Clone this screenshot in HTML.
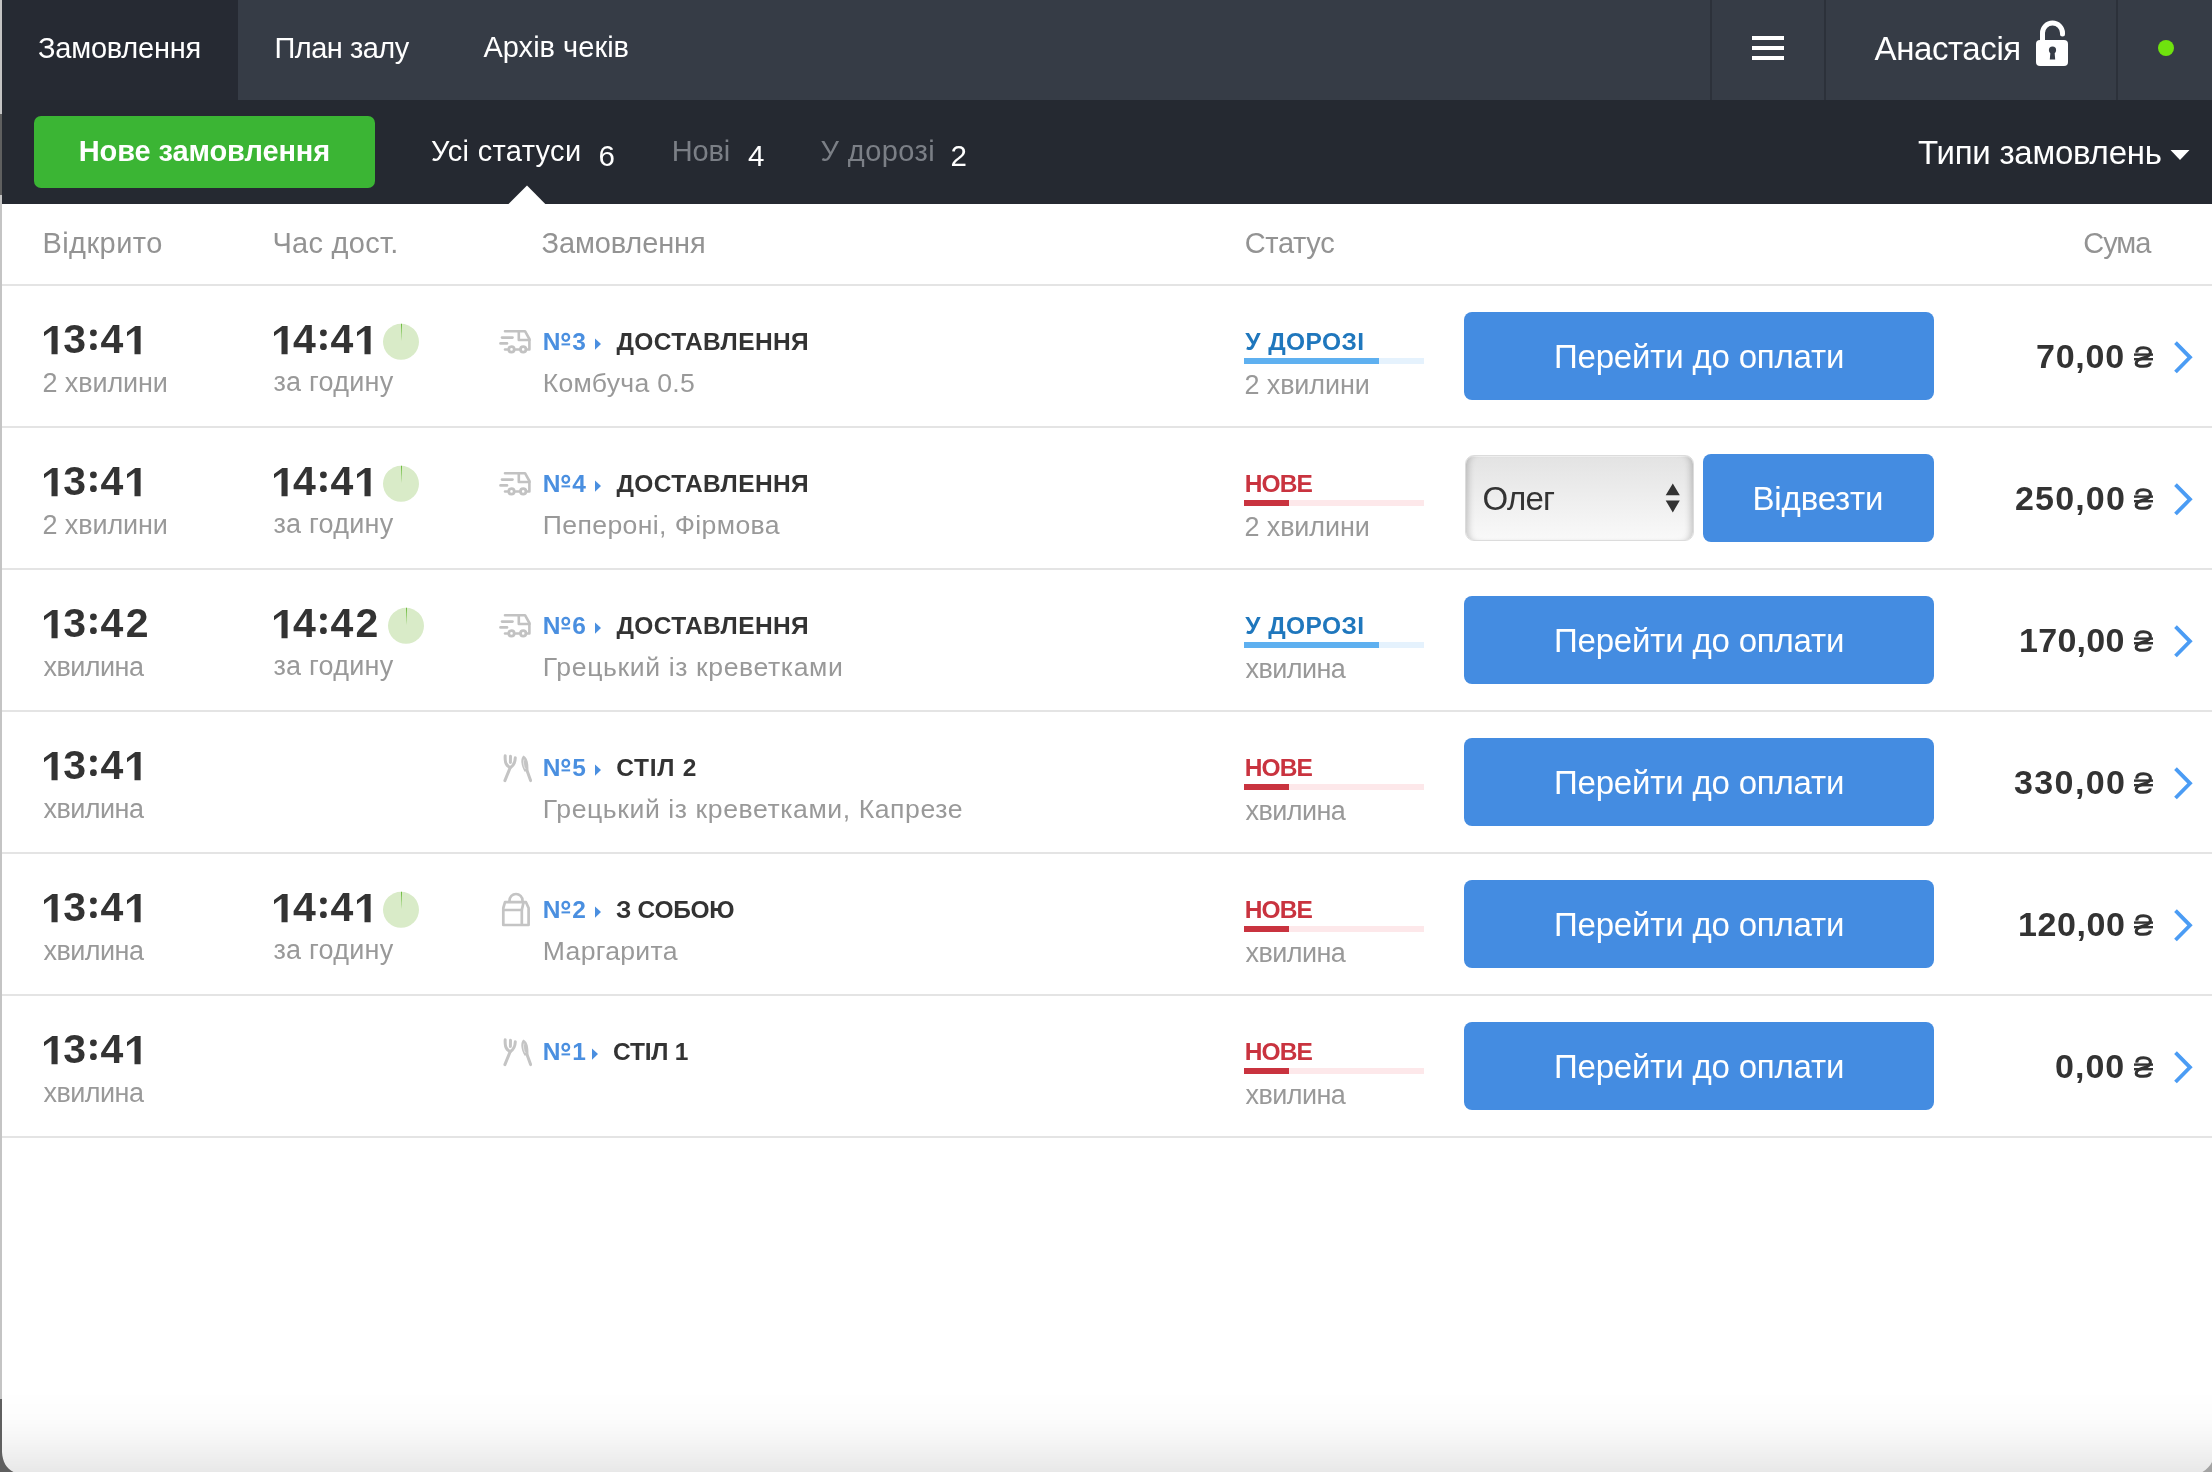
<!DOCTYPE html>
<html><head><meta charset="utf-8">
<style>
*{box-sizing:border-box;margin:0;padding:0}
html,body{width:2212px;height:1472px;overflow:hidden;background:#fff;font-family:"Liberation Sans",sans-serif}
.a{position:absolute;white-space:nowrap}
</style></head><body><div style="position:absolute;left:0;top:0;width:2212px;height:1472px;will-change:transform">
<div class="a" style="left:0;top:0;width:2212px;height:100px;background:#363c46"></div>
<div class="a" style="left:0;top:100px;width:2212px;height:104px;background:#252931"></div>
<div class="a" style="left:2px;top:0;width:236px;height:100px;background:#262a33"></div>
<div class="a" style="left:1710px;top:0;width:2px;height:100px;background:#2c313a"></div>
<div class="a" style="left:1824px;top:0;width:2px;height:100px;background:#2c313a"></div>
<div class="a" style="left:2116px;top:0;width:2px;height:100px;background:#2c313a"></div>
<div class="a" style="left:1752px;top:36px;width:32px;height:4px;background:#fff"></div>
<div class="a" style="left:1752px;top:46px;width:32px;height:4px;background:#fff"></div>
<div class="a" style="left:1752px;top:56px;width:32px;height:4px;background:#fff"></div>
<svg class="a" style="left:0;top:0" width="2212" height="100">
<path d="M2042.5 40 V33 A10 10 0 0 1 2062.5 33 V34" fill="none" stroke="#fff" stroke-width="5" stroke-linecap="round"/>
<rect x="2036" y="40" width="32" height="26" rx="4" fill="#fff"/>
<circle cx="2052.5" cy="50" r="3.6" fill="#363c46"/>
<path d="M2050.5 51 L2049.8 59.5 H2055.2 L2054.5 51 Z" fill="#363c46"/>
<circle cx="2166" cy="48" r="8" fill="#6fe20e"/>
</svg>
<div class="a" style="left:34px;top:116px;width:341px;height:72px;background:#3bb534;border-radius:7px"></div>
<svg class="a" style="left:0;top:100px" width="2212" height="104"><path d="M2170.5 50 H2189.5 L2180 60 Z" fill="#fff"/><path d="M508.5 104 L527 85.5 L545.3 104 Z" fill="#fff"/></svg>
<div class="a" style="left:0;top:284px;width:2212px;height:2px;background:#e4e4e4"></div>
<div class="a" style="left:0;top:426px;width:2212px;height:2px;background:#e4e4e4"></div>
<div class="a" style="left:0;top:568px;width:2212px;height:2px;background:#e4e4e4"></div>
<div class="a" style="left:0;top:710px;width:2212px;height:2px;background:#e4e4e4"></div>
<div class="a" style="left:0;top:852px;width:2212px;height:2px;background:#e4e4e4"></div>
<div class="a" style="left:0;top:994px;width:2212px;height:2px;background:#e4e4e4"></div>
<div class="a" style="left:0;top:1136px;width:2212px;height:2px;background:#e4e4e4"></div>
<svg class="a" style="left:43.9px;top:325.6px;overflow:visible" width="14" height="29"><path d="M0 6.1 L8.3 0 H13.6 V28.2 H7.5 V4.8 L0 10.2 Z" fill="#333"/></svg>
<svg class="a" style="left:89.8px;top:286px;overflow:visible" width="8" height="70"><circle cx="3.4" cy="46.8" r="3.4" fill="#333"/><circle cx="3.4" cy="60.7" r="3.4" fill="#333"/></svg>
<svg class="a" style="left:126.69999999999999px;top:325.6px;overflow:visible" width="14" height="29"><path d="M0 6.1 L8.3 0 H13.6 V28.2 H7.5 V4.8 L0 10.2 Z" fill="#333"/></svg>
<svg class="a" style="left:273.8px;top:325.6px;overflow:visible" width="14" height="29"><path d="M0 6.1 L8.3 0 H13.6 V28.2 H7.5 V4.8 L0 10.2 Z" fill="#333"/></svg>
<svg class="a" style="left:319.7px;top:286px;overflow:visible" width="8" height="70"><circle cx="3.4" cy="46.8" r="3.4" fill="#333"/><circle cx="3.4" cy="60.7" r="3.4" fill="#333"/></svg>
<svg class="a" style="left:356.6px;top:325.6px;overflow:visible" width="14" height="29"><path d="M0 6.1 L8.3 0 H13.6 V28.2 H7.5 V4.8 L0 10.2 Z" fill="#333"/></svg>
<svg class="a" style="left:0;top:286px;overflow:visible" width="1" height="1"><circle cx="401" cy="55.8" r="18" fill="#d9ebc8"/><path d="M401 55.8 L401 37.8 L401.9 37.8 Z" fill="#5db52a"/></svg>
<svg class="a" style="left:500px;top:330px;overflow:visible" width="40" height="30" viewBox="0 0 40 30">
<g fill="none" stroke="#c2c2c2" stroke-width="2.6" stroke-linecap="round" stroke-linejoin="round">
<path d="M5 1.2 H25 L29.4 9 V19.5 H26.5"/>
<path d="M18.8 1.2 V10 H29.4"/>
<path d="M2 7.6 H12.5"/>
<path d="M0.5 13.4 H7"/>
<path d="M5 19.5 H7.5 M15.5 19.5 H19.5"/>
<circle cx="11.5" cy="19.4" r="2.7" stroke-width="2.8"/>
<circle cx="23.2" cy="19.4" r="2.7" stroke-width="2.8"/>
</g></svg>
<svg class="a" style="left:0;top:286px;overflow:visible" width="1" height="1"><ellipse cx="565.8" cy="51.3" rx="3.3" ry="3.5" fill="none" stroke="#4a8fe0" stroke-width="2.3"/><rect x="561.5" y="57.4" width="8.6" height="2" fill="#4a8fe0"/></svg>
<svg class="a" style="left:0;top:286px;overflow:visible" width="1" height="1"><path d="M595 52.4 L601 58 L595 63.7 Z" fill="#4a8fe0"/></svg>
<div class="a" style="left:1244px;top:358px;width:180px;height:6px;background:#e5f2fd"></div><div class="a" style="left:1244px;top:358px;width:135px;height:6px;background:#5eb0f0"></div>
<div class="a" style="left:1464px;top:312px;width:470px;height:88px;background:#448ce1;border-radius:8px"></div>
<svg class="a" style="left:0;top:286px;overflow:visible" width="1" height="1"><g fill="none" stroke="#333" stroke-width="3.1" stroke-linecap="butt"><path d="M2136.9 66.6 C2136.6 63 2139.6 61.7 2143.5 61.7 C2147.6 61.7 2150.4 63.5 2150.4 66.4 C2150.4 69.6 2146 71.2 2143.2 72.1 C2139.6 73.2 2136.2 74.8 2136.2 77.4 C2136.2 79.6 2139 80.3 2143.3 80.3 C2147.3 80.3 2150.2 79.2 2150.2 76.6"/></g><rect x="2134" y="67.4" width="19" height="2.4" fill="#333"/><rect x="2134" y="72" width="19" height="2.4" fill="#333"/></svg>
<svg class="a" style="left:0;top:286px;overflow:visible" width="1" height="1"><path d="M2175.5 56.6 L2190 71.3 L2175.5 86" fill="none" stroke="#4b9cf4" stroke-width="3.8"/></svg>
<svg class="a" style="left:43.9px;top:467.6px;overflow:visible" width="14" height="29"><path d="M0 6.1 L8.3 0 H13.6 V28.2 H7.5 V4.8 L0 10.2 Z" fill="#333"/></svg>
<svg class="a" style="left:89.8px;top:428px;overflow:visible" width="8" height="70"><circle cx="3.4" cy="46.8" r="3.4" fill="#333"/><circle cx="3.4" cy="60.7" r="3.4" fill="#333"/></svg>
<svg class="a" style="left:126.69999999999999px;top:467.6px;overflow:visible" width="14" height="29"><path d="M0 6.1 L8.3 0 H13.6 V28.2 H7.5 V4.8 L0 10.2 Z" fill="#333"/></svg>
<svg class="a" style="left:273.8px;top:467.6px;overflow:visible" width="14" height="29"><path d="M0 6.1 L8.3 0 H13.6 V28.2 H7.5 V4.8 L0 10.2 Z" fill="#333"/></svg>
<svg class="a" style="left:319.7px;top:428px;overflow:visible" width="8" height="70"><circle cx="3.4" cy="46.8" r="3.4" fill="#333"/><circle cx="3.4" cy="60.7" r="3.4" fill="#333"/></svg>
<svg class="a" style="left:356.6px;top:467.6px;overflow:visible" width="14" height="29"><path d="M0 6.1 L8.3 0 H13.6 V28.2 H7.5 V4.8 L0 10.2 Z" fill="#333"/></svg>
<svg class="a" style="left:0;top:428px;overflow:visible" width="1" height="1"><circle cx="401" cy="55.8" r="18" fill="#d9ebc8"/><path d="M401 55.8 L401 37.8 L401.9 37.8 Z" fill="#5db52a"/></svg>
<svg class="a" style="left:500px;top:472px;overflow:visible" width="40" height="30" viewBox="0 0 40 30">
<g fill="none" stroke="#c2c2c2" stroke-width="2.6" stroke-linecap="round" stroke-linejoin="round">
<path d="M5 1.2 H25 L29.4 9 V19.5 H26.5"/>
<path d="M18.8 1.2 V10 H29.4"/>
<path d="M2 7.6 H12.5"/>
<path d="M0.5 13.4 H7"/>
<path d="M5 19.5 H7.5 M15.5 19.5 H19.5"/>
<circle cx="11.5" cy="19.4" r="2.7" stroke-width="2.8"/>
<circle cx="23.2" cy="19.4" r="2.7" stroke-width="2.8"/>
</g></svg>
<svg class="a" style="left:0;top:428px;overflow:visible" width="1" height="1"><ellipse cx="565.8" cy="51.3" rx="3.3" ry="3.5" fill="none" stroke="#4a8fe0" stroke-width="2.3"/><rect x="561.5" y="57.4" width="8.6" height="2" fill="#4a8fe0"/></svg>
<svg class="a" style="left:0;top:428px;overflow:visible" width="1" height="1"><path d="M595 52.4 L601 58 L595 63.7 Z" fill="#4a8fe0"/></svg>
<div class="a" style="left:1244px;top:500px;width:180px;height:6px;background:#fde8ea"></div><div class="a" style="left:1244px;top:500px;width:45px;height:6px;background:#c9333f"></div>
<div class="a" style="left:1464.5px;top:454.6px;width:229.5px;height:86.5px;border-radius:9px;border:1.5px solid #dcdcdc;background:linear-gradient(#e3e3e3,#f9f9f9);box-shadow:inset 7px 0 7px -5px rgba(0,0,0,.22), inset -7px 0 7px -5px rgba(0,0,0,.22), inset 0 1px 0 rgba(255,255,255,.6)"></div>
<svg class="a" style="left:0;top:428px;overflow:visible" width="1" height="1"><path d="M1665.7 67.2 L1672.8 55.5 L1679.8 67.2 Z M1665.7 72.6 L1679.8 72.6 L1672.8 84.4 Z" fill="#333"/></svg>
<div class="a" style="left:1703px;top:454px;width:231px;height:87.5px;background:#448ce1;border-radius:8px"></div>
<svg class="a" style="left:0;top:428px;overflow:visible" width="1" height="1"><g fill="none" stroke="#333" stroke-width="3.1" stroke-linecap="butt"><path d="M2136.9 66.6 C2136.6 63 2139.6 61.7 2143.5 61.7 C2147.6 61.7 2150.4 63.5 2150.4 66.4 C2150.4 69.6 2146 71.2 2143.2 72.1 C2139.6 73.2 2136.2 74.8 2136.2 77.4 C2136.2 79.6 2139 80.3 2143.3 80.3 C2147.3 80.3 2150.2 79.2 2150.2 76.6"/></g><rect x="2134" y="67.4" width="19" height="2.4" fill="#333"/><rect x="2134" y="72" width="19" height="2.4" fill="#333"/></svg>
<svg class="a" style="left:0;top:428px;overflow:visible" width="1" height="1"><path d="M2175.5 56.6 L2190 71.3 L2175.5 86" fill="none" stroke="#4b9cf4" stroke-width="3.8"/></svg>
<svg class="a" style="left:43.9px;top:609.6px;overflow:visible" width="14" height="29"><path d="M0 6.1 L8.3 0 H13.6 V28.2 H7.5 V4.8 L0 10.2 Z" fill="#333"/></svg>
<svg class="a" style="left:89.8px;top:570px;overflow:visible" width="8" height="70"><circle cx="3.4" cy="46.8" r="3.4" fill="#333"/><circle cx="3.4" cy="60.7" r="3.4" fill="#333"/></svg>
<svg class="a" style="left:273.8px;top:609.6px;overflow:visible" width="14" height="29"><path d="M0 6.1 L8.3 0 H13.6 V28.2 H7.5 V4.8 L0 10.2 Z" fill="#333"/></svg>
<svg class="a" style="left:319.7px;top:570px;overflow:visible" width="8" height="70"><circle cx="3.4" cy="46.8" r="3.4" fill="#333"/><circle cx="3.4" cy="60.7" r="3.4" fill="#333"/></svg>
<svg class="a" style="left:0;top:570px;overflow:visible" width="1" height="1"><circle cx="406" cy="55.8" r="18" fill="#d9ebc8"/><path d="M406 55.8 L406 37.8 L406.9 37.8 Z" fill="#5db52a"/></svg>
<svg class="a" style="left:500px;top:614px;overflow:visible" width="40" height="30" viewBox="0 0 40 30">
<g fill="none" stroke="#c2c2c2" stroke-width="2.6" stroke-linecap="round" stroke-linejoin="round">
<path d="M5 1.2 H25 L29.4 9 V19.5 H26.5"/>
<path d="M18.8 1.2 V10 H29.4"/>
<path d="M2 7.6 H12.5"/>
<path d="M0.5 13.4 H7"/>
<path d="M5 19.5 H7.5 M15.5 19.5 H19.5"/>
<circle cx="11.5" cy="19.4" r="2.7" stroke-width="2.8"/>
<circle cx="23.2" cy="19.4" r="2.7" stroke-width="2.8"/>
</g></svg>
<svg class="a" style="left:0;top:570px;overflow:visible" width="1" height="1"><ellipse cx="565.8" cy="51.3" rx="3.3" ry="3.5" fill="none" stroke="#4a8fe0" stroke-width="2.3"/><rect x="561.5" y="57.4" width="8.6" height="2" fill="#4a8fe0"/></svg>
<svg class="a" style="left:0;top:570px;overflow:visible" width="1" height="1"><path d="M595 52.4 L601 58 L595 63.7 Z" fill="#4a8fe0"/></svg>
<div class="a" style="left:1244px;top:642px;width:180px;height:6px;background:#e5f2fd"></div><div class="a" style="left:1244px;top:642px;width:135px;height:6px;background:#5eb0f0"></div>
<div class="a" style="left:1464px;top:596px;width:470px;height:88px;background:#448ce1;border-radius:8px"></div>
<svg class="a" style="left:0;top:570px;overflow:visible" width="1" height="1"><g fill="none" stroke="#333" stroke-width="3.1" stroke-linecap="butt"><path d="M2136.9 66.6 C2136.6 63 2139.6 61.7 2143.5 61.7 C2147.6 61.7 2150.4 63.5 2150.4 66.4 C2150.4 69.6 2146 71.2 2143.2 72.1 C2139.6 73.2 2136.2 74.8 2136.2 77.4 C2136.2 79.6 2139 80.3 2143.3 80.3 C2147.3 80.3 2150.2 79.2 2150.2 76.6"/></g><rect x="2134" y="67.4" width="19" height="2.4" fill="#333"/><rect x="2134" y="72" width="19" height="2.4" fill="#333"/></svg>
<svg class="a" style="left:0;top:570px;overflow:visible" width="1" height="1"><path d="M2175.5 56.6 L2190 71.3 L2175.5 86" fill="none" stroke="#4b9cf4" stroke-width="3.8"/></svg>
<svg class="a" style="left:43.9px;top:751.6px;overflow:visible" width="14" height="29"><path d="M0 6.1 L8.3 0 H13.6 V28.2 H7.5 V4.8 L0 10.2 Z" fill="#333"/></svg>
<svg class="a" style="left:89.8px;top:712px;overflow:visible" width="8" height="70"><circle cx="3.4" cy="46.8" r="3.4" fill="#333"/><circle cx="3.4" cy="60.7" r="3.4" fill="#333"/></svg>
<svg class="a" style="left:126.69999999999999px;top:751.6px;overflow:visible" width="14" height="29"><path d="M0 6.1 L8.3 0 H13.6 V28.2 H7.5 V4.8 L0 10.2 Z" fill="#333"/></svg>
<svg class="a" style="left:503px;top:755px;overflow:visible" width="40" height="30" viewBox="0 0 40 30">
<g fill="none" stroke="#c4c4c4" stroke-width="3" stroke-linecap="round" stroke-linejoin="round">
<path d="M2.2 0.8 C2 5 1.8 10 7.2 12.6 C11.8 10 12.2 6 12.3 2.8"/>
<path d="M7.5 1.2 L7.4 7.5"/>
<path d="M7.2 12.6 L1.9 25.6"/>
<path d="M24 15.6 L27.6 25.6"/>
</g>
<path d="M20.6 0.4 C17.2 2.6 17.6 10 21.6 16.8 L25.4 15.4 C25.6 9 25 3 20.6 0.4 Z" fill="#c4c4c4"/>
<path d="M21 4.5 C20 7 20.5 11 22.3 14" stroke="#fff" stroke-width="0.9" fill="none" opacity="0.6"/>
</svg>
<svg class="a" style="left:0;top:712px;overflow:visible" width="1" height="1"><ellipse cx="565.8" cy="51.3" rx="3.3" ry="3.5" fill="none" stroke="#4a8fe0" stroke-width="2.3"/><rect x="561.5" y="57.4" width="8.6" height="2" fill="#4a8fe0"/></svg>
<svg class="a" style="left:0;top:712px;overflow:visible" width="1" height="1"><path d="M595 52.4 L601 58 L595 63.7 Z" fill="#4a8fe0"/></svg>
<div class="a" style="left:1244px;top:784px;width:180px;height:6px;background:#fde8ea"></div><div class="a" style="left:1244px;top:784px;width:45px;height:6px;background:#c9333f"></div>
<div class="a" style="left:1464px;top:738px;width:470px;height:88px;background:#448ce1;border-radius:8px"></div>
<svg class="a" style="left:0;top:712px;overflow:visible" width="1" height="1"><g fill="none" stroke="#333" stroke-width="3.1" stroke-linecap="butt"><path d="M2136.9 66.6 C2136.6 63 2139.6 61.7 2143.5 61.7 C2147.6 61.7 2150.4 63.5 2150.4 66.4 C2150.4 69.6 2146 71.2 2143.2 72.1 C2139.6 73.2 2136.2 74.8 2136.2 77.4 C2136.2 79.6 2139 80.3 2143.3 80.3 C2147.3 80.3 2150.2 79.2 2150.2 76.6"/></g><rect x="2134" y="67.4" width="19" height="2.4" fill="#333"/><rect x="2134" y="72" width="19" height="2.4" fill="#333"/></svg>
<svg class="a" style="left:0;top:712px;overflow:visible" width="1" height="1"><path d="M2175.5 56.6 L2190 71.3 L2175.5 86" fill="none" stroke="#4b9cf4" stroke-width="3.8"/></svg>
<svg class="a" style="left:43.9px;top:893.6px;overflow:visible" width="14" height="29"><path d="M0 6.1 L8.3 0 H13.6 V28.2 H7.5 V4.8 L0 10.2 Z" fill="#333"/></svg>
<svg class="a" style="left:89.8px;top:854px;overflow:visible" width="8" height="70"><circle cx="3.4" cy="46.8" r="3.4" fill="#333"/><circle cx="3.4" cy="60.7" r="3.4" fill="#333"/></svg>
<svg class="a" style="left:126.69999999999999px;top:893.6px;overflow:visible" width="14" height="29"><path d="M0 6.1 L8.3 0 H13.6 V28.2 H7.5 V4.8 L0 10.2 Z" fill="#333"/></svg>
<svg class="a" style="left:273.8px;top:893.6px;overflow:visible" width="14" height="29"><path d="M0 6.1 L8.3 0 H13.6 V28.2 H7.5 V4.8 L0 10.2 Z" fill="#333"/></svg>
<svg class="a" style="left:319.7px;top:854px;overflow:visible" width="8" height="70"><circle cx="3.4" cy="46.8" r="3.4" fill="#333"/><circle cx="3.4" cy="60.7" r="3.4" fill="#333"/></svg>
<svg class="a" style="left:356.6px;top:893.6px;overflow:visible" width="14" height="29"><path d="M0 6.1 L8.3 0 H13.6 V28.2 H7.5 V4.8 L0 10.2 Z" fill="#333"/></svg>
<svg class="a" style="left:0;top:854px;overflow:visible" width="1" height="1"><circle cx="401" cy="55.8" r="18" fill="#d9ebc8"/><path d="M401 55.8 L401 37.8 L401.9 37.8 Z" fill="#5db52a"/></svg>
<svg class="a" style="left:501.5px;top:896px;overflow:visible" width="40" height="40" viewBox="0 0 40 40">
<g fill="none" stroke="#c4c4c4" stroke-width="2.7" stroke-linejoin="round">
<path d="M1.3 29 V12 L3 6.2 H24 L26.6 12 V29 Z"/>
<path d="M1.3 14 H19.8 V29"/>
<path d="M19.8 14 L21.5 6.5"/>
<path d="M7.5 6.2 V4.5 A6.5 6.5 0 0 1 20.5 4.5 V6.2"/>
</g></svg>
<svg class="a" style="left:0;top:854px;overflow:visible" width="1" height="1"><ellipse cx="565.8" cy="51.3" rx="3.3" ry="3.5" fill="none" stroke="#4a8fe0" stroke-width="2.3"/><rect x="561.5" y="57.4" width="8.6" height="2" fill="#4a8fe0"/></svg>
<svg class="a" style="left:0;top:854px;overflow:visible" width="1" height="1"><path d="M595 52.4 L601 58 L595 63.7 Z" fill="#4a8fe0"/></svg>
<div class="a" style="left:1244px;top:926px;width:180px;height:6px;background:#fde8ea"></div><div class="a" style="left:1244px;top:926px;width:45px;height:6px;background:#c9333f"></div>
<div class="a" style="left:1464px;top:880px;width:470px;height:88px;background:#448ce1;border-radius:8px"></div>
<svg class="a" style="left:0;top:854px;overflow:visible" width="1" height="1"><g fill="none" stroke="#333" stroke-width="3.1" stroke-linecap="butt"><path d="M2136.9 66.6 C2136.6 63 2139.6 61.7 2143.5 61.7 C2147.6 61.7 2150.4 63.5 2150.4 66.4 C2150.4 69.6 2146 71.2 2143.2 72.1 C2139.6 73.2 2136.2 74.8 2136.2 77.4 C2136.2 79.6 2139 80.3 2143.3 80.3 C2147.3 80.3 2150.2 79.2 2150.2 76.6"/></g><rect x="2134" y="67.4" width="19" height="2.4" fill="#333"/><rect x="2134" y="72" width="19" height="2.4" fill="#333"/></svg>
<svg class="a" style="left:0;top:854px;overflow:visible" width="1" height="1"><path d="M2175.5 56.6 L2190 71.3 L2175.5 86" fill="none" stroke="#4b9cf4" stroke-width="3.8"/></svg>
<svg class="a" style="left:43.9px;top:1035.6px;overflow:visible" width="14" height="29"><path d="M0 6.1 L8.3 0 H13.6 V28.2 H7.5 V4.8 L0 10.2 Z" fill="#333"/></svg>
<svg class="a" style="left:89.8px;top:996px;overflow:visible" width="8" height="70"><circle cx="3.4" cy="46.8" r="3.4" fill="#333"/><circle cx="3.4" cy="60.7" r="3.4" fill="#333"/></svg>
<svg class="a" style="left:126.69999999999999px;top:1035.6px;overflow:visible" width="14" height="29"><path d="M0 6.1 L8.3 0 H13.6 V28.2 H7.5 V4.8 L0 10.2 Z" fill="#333"/></svg>
<svg class="a" style="left:503px;top:1039px;overflow:visible" width="40" height="30" viewBox="0 0 40 30">
<g fill="none" stroke="#c4c4c4" stroke-width="3" stroke-linecap="round" stroke-linejoin="round">
<path d="M2.2 0.8 C2 5 1.8 10 7.2 12.6 C11.8 10 12.2 6 12.3 2.8"/>
<path d="M7.5 1.2 L7.4 7.5"/>
<path d="M7.2 12.6 L1.9 25.6"/>
<path d="M24 15.6 L27.6 25.6"/>
</g>
<path d="M20.6 0.4 C17.2 2.6 17.6 10 21.6 16.8 L25.4 15.4 C25.6 9 25 3 20.6 0.4 Z" fill="#c4c4c4"/>
<path d="M21 4.5 C20 7 20.5 11 22.3 14" stroke="#fff" stroke-width="0.9" fill="none" opacity="0.6"/>
</svg>
<svg class="a" style="left:0;top:996px;overflow:visible" width="1" height="1"><ellipse cx="565.8" cy="51.3" rx="3.3" ry="3.5" fill="none" stroke="#4a8fe0" stroke-width="2.3"/><rect x="561.5" y="57.4" width="8.6" height="2" fill="#4a8fe0"/></svg>
<svg class="a" style="left:0;top:996px;overflow:visible" width="1" height="1"><path d="M592 52.4 L598 58 L592 63.7 Z" fill="#4a8fe0"/></svg>
<div class="a" style="left:1244px;top:1068px;width:180px;height:6px;background:#fde8ea"></div><div class="a" style="left:1244px;top:1068px;width:45px;height:6px;background:#c9333f"></div>
<div class="a" style="left:1464px;top:1022px;width:470px;height:88px;background:#448ce1;border-radius:8px"></div>
<svg class="a" style="left:0;top:996px;overflow:visible" width="1" height="1"><g fill="none" stroke="#333" stroke-width="3.1" stroke-linecap="butt"><path d="M2136.9 66.6 C2136.6 63 2139.6 61.7 2143.5 61.7 C2147.6 61.7 2150.4 63.5 2150.4 66.4 C2150.4 69.6 2146 71.2 2143.2 72.1 C2139.6 73.2 2136.2 74.8 2136.2 77.4 C2136.2 79.6 2139 80.3 2143.3 80.3 C2147.3 80.3 2150.2 79.2 2150.2 76.6"/></g><rect x="2134" y="67.4" width="19" height="2.4" fill="#333"/><rect x="2134" y="72" width="19" height="2.4" fill="#333"/></svg>
<svg class="a" style="left:0;top:996px;overflow:visible" width="1" height="1"><path d="M2175.5 56.6 L2190 71.3 L2175.5 86" fill="none" stroke="#4b9cf4" stroke-width="3.8"/></svg>
<div class="a" style="left:38.00px;top:31.05px;font-size:29px;line-height:35px;color:#fff;font-weight:400;letter-spacing:-0.222px">Замовлення</div>
<div class="a" style="left:274.50px;top:30.75px;font-size:29px;line-height:35px;color:#fff;font-weight:400;letter-spacing:-0.513px">План залу</div>
<div class="a" style="left:483.40px;top:30.45px;font-size:29px;line-height:35px;color:#fff;font-weight:400;letter-spacing:0.03px">Архів чеків</div>
<div class="a" style="left:1874.60px;top:29.16px;font-size:33px;line-height:40px;color:#fff;font-weight:400;letter-spacing:-0.412px">Анастасія</div>
<div class="a" style="left:78.70px;top:134.35px;font-size:29px;line-height:35px;color:#fff;font-weight:700;letter-spacing:-0.093px">Нове замовлення</div>
<div class="a" style="left:430.90px;top:134.45px;font-size:29px;line-height:35px;color:#fff;font-weight:400;letter-spacing:0.33px">Усі статуси</div>
<div class="a" style="left:598.60px;top:137.57px;font-size:29.5px;line-height:35px;color:#fff;font-weight:400;letter-spacing:0px">6</div>
<div class="a" style="left:671.80px;top:133.95px;font-size:29px;line-height:35px;color:#7b7f86;font-weight:400;letter-spacing:-0.167px">Нові</div>
<div class="a" style="left:748.00px;top:137.77px;font-size:29.5px;line-height:35px;color:#fff;font-weight:400;letter-spacing:0px">4</div>
<div class="a" style="left:820.50px;top:133.95px;font-size:29px;line-height:35px;color:#7b7f86;font-weight:400;letter-spacing:0.414px">У дорозі</div>
<div class="a" style="left:950.50px;top:137.77px;font-size:29.5px;line-height:35px;color:#fff;font-weight:400;letter-spacing:0px">2</div>
<div class="a" style="left:1918.00px;top:133.26px;font-size:33px;line-height:40px;color:#fff;font-weight:400;letter-spacing:-0.231px">Типи замовлень</div>
<div class="a" style="left:42.40px;top:226.35px;font-size:29px;line-height:35px;color:#939393;font-weight:400;letter-spacing:0.457px">Відкрито</div>
<div class="a" style="left:272.50px;top:226.35px;font-size:29px;line-height:35px;color:#939393;font-weight:400;letter-spacing:0.275px">Час дост.</div>
<div class="a" style="left:541.50px;top:226.35px;font-size:29px;line-height:35px;color:#939393;font-weight:400;letter-spacing:-0.122px">Замовлення</div>
<div class="a" style="left:1244.70px;top:226.35px;font-size:29px;line-height:35px;color:#939393;font-weight:400;letter-spacing:-0.34px">Статус</div>
<div class="a" style="left:2083.20px;top:226.35px;font-size:29px;line-height:35px;color:#939393;font-weight:400;letter-spacing:-0.967px">Сума</div>
<div class="a" style="left:63.20px;top:315.09px;font-size:41px;line-height:49px;color:#333;font-weight:700;letter-spacing:0px">3</div>
<div class="a" style="left:100.60px;top:315.09px;font-size:41px;line-height:49px;color:#333;font-weight:700;letter-spacing:0px">4</div>
<div class="a" style="left:42.60px;top:366.54px;font-size:27px;line-height:32px;color:#999;font-weight:400;letter-spacing:-0.125px">2 хвилини</div>
<div class="a" style="left:293.10px;top:315.09px;font-size:41px;line-height:49px;color:#333;font-weight:700;letter-spacing:0px">4</div>
<div class="a" style="left:330.50px;top:315.09px;font-size:41px;line-height:49px;color:#333;font-weight:700;letter-spacing:0px">4</div>
<div class="a" style="left:273.40px;top:366.44px;font-size:27px;line-height:32px;color:#999;font-weight:400;letter-spacing:0.25px">за годину</div>
<div class="a" style="left:542.80px;top:326.81px;font-size:24.5px;line-height:29px;color:#4a8fe0;font-weight:700;letter-spacing:0px">N</div>
<div class="a" style="left:572.30px;top:326.81px;font-size:24.5px;line-height:29px;color:#4a8fe0;font-weight:700;letter-spacing:0px">3</div>
<div class="a" style="left:616.40px;top:326.91px;font-size:24.5px;line-height:29px;color:#333;font-weight:700;letter-spacing:0.4px">ДОСТАВЛЕННЯ</div>
<div class="a" style="left:542.80px;top:366.58px;font-size:26.6px;line-height:32px;color:#999;font-weight:400;letter-spacing:0.27px">Комбуча 0.5</div>
<div class="a" style="left:1245.20px;top:326.91px;font-size:24.5px;line-height:29px;color:#1f77bd;font-weight:700;letter-spacing:0.457px">У ДОРОЗІ</div>
<div class="a" style="left:1244.50px;top:369.44px;font-size:27px;line-height:32px;color:#999;font-weight:400;letter-spacing:-0.125px">2 хвилини</div>
<div class="a" style="left:1554.00px;top:336.56px;font-size:33px;line-height:40px;color:#fff;font-weight:400;letter-spacing:-0.188px">Перейти до оплати</div>
<div class="a" style="left:2036.00px;top:336.01px;font-size:34px;line-height:41px;color:#333;font-weight:700;letter-spacing:0.775px">70,00</div>
<div class="a" style="left:63.20px;top:457.09px;font-size:41px;line-height:49px;color:#333;font-weight:700;letter-spacing:0px">3</div>
<div class="a" style="left:100.60px;top:457.09px;font-size:41px;line-height:49px;color:#333;font-weight:700;letter-spacing:0px">4</div>
<div class="a" style="left:42.60px;top:508.54px;font-size:27px;line-height:32px;color:#999;font-weight:400;letter-spacing:-0.125px">2 хвилини</div>
<div class="a" style="left:293.10px;top:457.09px;font-size:41px;line-height:49px;color:#333;font-weight:700;letter-spacing:0px">4</div>
<div class="a" style="left:330.50px;top:457.09px;font-size:41px;line-height:49px;color:#333;font-weight:700;letter-spacing:0px">4</div>
<div class="a" style="left:273.40px;top:508.44px;font-size:27px;line-height:32px;color:#999;font-weight:400;letter-spacing:0.25px">за годину</div>
<div class="a" style="left:542.80px;top:468.81px;font-size:24.5px;line-height:29px;color:#4a8fe0;font-weight:700;letter-spacing:0px">N</div>
<div class="a" style="left:572.30px;top:468.81px;font-size:24.5px;line-height:29px;color:#4a8fe0;font-weight:700;letter-spacing:0px">4</div>
<div class="a" style="left:616.40px;top:468.91px;font-size:24.5px;line-height:29px;color:#333;font-weight:700;letter-spacing:0.4px">ДОСТАВЛЕННЯ</div>
<div class="a" style="left:542.80px;top:508.58px;font-size:26.6px;line-height:32px;color:#999;font-weight:400;letter-spacing:0.381px">Пепероні, Фірмова</div>
<div class="a" style="left:1244.70px;top:468.91px;font-size:24.5px;line-height:29px;color:#c9333f;font-weight:700;letter-spacing:-0.867px">НОВЕ</div>
<div class="a" style="left:1244.50px;top:511.44px;font-size:27px;line-height:32px;color:#999;font-weight:400;letter-spacing:-0.125px">2 хвилини</div>
<div class="a" style="left:1482.50px;top:478.56px;font-size:33px;line-height:40px;color:#333;font-weight:400;letter-spacing:-0.833px">Олег</div>
<div class="a" style="left:1752.50px;top:478.56px;font-size:33px;line-height:40px;color:#fff;font-weight:400;letter-spacing:-0.157px">Відвезти</div>
<div class="a" style="left:2015.00px;top:478.01px;font-size:34px;line-height:41px;color:#333;font-weight:700;letter-spacing:1.16px">250,00</div>
<div class="a" style="left:63.20px;top:599.09px;font-size:41px;line-height:49px;color:#333;font-weight:700;letter-spacing:0px">3</div>
<div class="a" style="left:100.60px;top:599.09px;font-size:41px;line-height:49px;color:#333;font-weight:700;letter-spacing:0px">4</div>
<div class="a" style="left:125.70px;top:599.09px;font-size:41px;line-height:49px;color:#333;font-weight:700;letter-spacing:0px">2</div>
<div class="a" style="left:43.60px;top:650.54px;font-size:27px;line-height:32px;color:#999;font-weight:400;letter-spacing:-0.55px">хвилина</div>
<div class="a" style="left:293.10px;top:599.09px;font-size:41px;line-height:49px;color:#333;font-weight:700;letter-spacing:0px">4</div>
<div class="a" style="left:330.50px;top:599.09px;font-size:41px;line-height:49px;color:#333;font-weight:700;letter-spacing:0px">4</div>
<div class="a" style="left:355.60px;top:599.09px;font-size:41px;line-height:49px;color:#333;font-weight:700;letter-spacing:0px">2</div>
<div class="a" style="left:273.40px;top:650.44px;font-size:27px;line-height:32px;color:#999;font-weight:400;letter-spacing:0.25px">за годину</div>
<div class="a" style="left:542.80px;top:610.81px;font-size:24.5px;line-height:29px;color:#4a8fe0;font-weight:700;letter-spacing:0px">N</div>
<div class="a" style="left:572.30px;top:610.81px;font-size:24.5px;line-height:29px;color:#4a8fe0;font-weight:700;letter-spacing:0px">6</div>
<div class="a" style="left:616.40px;top:610.91px;font-size:24.5px;line-height:29px;color:#333;font-weight:700;letter-spacing:0.4px">ДОСТАВЛЕННЯ</div>
<div class="a" style="left:542.80px;top:650.58px;font-size:26.6px;line-height:32px;color:#999;font-weight:400;letter-spacing:0.619px">Грецький із креветками</div>
<div class="a" style="left:1245.20px;top:610.91px;font-size:24.5px;line-height:29px;color:#1f77bd;font-weight:700;letter-spacing:0.457px">У ДОРОЗІ</div>
<div class="a" style="left:1245.50px;top:653.44px;font-size:27px;line-height:32px;color:#999;font-weight:400;letter-spacing:-0.55px">хвилина</div>
<div class="a" style="left:1554.00px;top:620.56px;font-size:33px;line-height:40px;color:#fff;font-weight:400;letter-spacing:-0.188px">Перейти до оплати</div>
<div class="a" style="left:2019.00px;top:620.01px;font-size:34px;line-height:41px;color:#333;font-weight:700;letter-spacing:0.28px">170,00</div>
<div class="a" style="left:63.20px;top:741.09px;font-size:41px;line-height:49px;color:#333;font-weight:700;letter-spacing:0px">3</div>
<div class="a" style="left:100.60px;top:741.09px;font-size:41px;line-height:49px;color:#333;font-weight:700;letter-spacing:0px">4</div>
<div class="a" style="left:43.60px;top:792.54px;font-size:27px;line-height:32px;color:#999;font-weight:400;letter-spacing:-0.55px">хвилина</div>
<div class="a" style="left:542.80px;top:752.81px;font-size:24.5px;line-height:29px;color:#4a8fe0;font-weight:700;letter-spacing:0px">N</div>
<div class="a" style="left:572.30px;top:752.81px;font-size:24.5px;line-height:29px;color:#4a8fe0;font-weight:700;letter-spacing:0px">5</div>
<div class="a" style="left:616.30px;top:752.91px;font-size:24.5px;line-height:29px;color:#333;font-weight:700;letter-spacing:0.74px">СТІЛ 2</div>
<div class="a" style="left:542.80px;top:792.58px;font-size:26.6px;line-height:32px;color:#999;font-weight:400;letter-spacing:0.583px">Грецький із креветками, Капрезе</div>
<div class="a" style="left:1244.70px;top:752.91px;font-size:24.5px;line-height:29px;color:#c9333f;font-weight:700;letter-spacing:-0.867px">НОВЕ</div>
<div class="a" style="left:1245.50px;top:795.44px;font-size:27px;line-height:32px;color:#999;font-weight:400;letter-spacing:-0.55px">хвилина</div>
<div class="a" style="left:1554.00px;top:762.56px;font-size:33px;line-height:40px;color:#fff;font-weight:400;letter-spacing:-0.188px">Перейти до оплати</div>
<div class="a" style="left:2014.00px;top:762.01px;font-size:34px;line-height:41px;color:#333;font-weight:700;letter-spacing:1.4px">330,00</div>
<div class="a" style="left:63.20px;top:883.09px;font-size:41px;line-height:49px;color:#333;font-weight:700;letter-spacing:0px">3</div>
<div class="a" style="left:100.60px;top:883.09px;font-size:41px;line-height:49px;color:#333;font-weight:700;letter-spacing:0px">4</div>
<div class="a" style="left:43.60px;top:934.54px;font-size:27px;line-height:32px;color:#999;font-weight:400;letter-spacing:-0.55px">хвилина</div>
<div class="a" style="left:293.10px;top:883.09px;font-size:41px;line-height:49px;color:#333;font-weight:700;letter-spacing:0px">4</div>
<div class="a" style="left:330.50px;top:883.09px;font-size:41px;line-height:49px;color:#333;font-weight:700;letter-spacing:0px">4</div>
<div class="a" style="left:273.40px;top:934.44px;font-size:27px;line-height:32px;color:#999;font-weight:400;letter-spacing:0.25px">за годину</div>
<div class="a" style="left:542.80px;top:894.81px;font-size:24.5px;line-height:29px;color:#4a8fe0;font-weight:700;letter-spacing:0px">N</div>
<div class="a" style="left:572.30px;top:894.81px;font-size:24.5px;line-height:29px;color:#4a8fe0;font-weight:700;letter-spacing:0px">2</div>
<div class="a" style="left:616.00px;top:894.91px;font-size:24.5px;line-height:29px;color:#333;font-weight:700;letter-spacing:-0.267px">З СОБОЮ</div>
<div class="a" style="left:542.80px;top:934.58px;font-size:26.6px;line-height:32px;color:#999;font-weight:400;letter-spacing:0.3px">Маргарита</div>
<div class="a" style="left:1244.70px;top:894.91px;font-size:24.5px;line-height:29px;color:#c9333f;font-weight:700;letter-spacing:-0.867px">НОВЕ</div>
<div class="a" style="left:1245.50px;top:937.44px;font-size:27px;line-height:32px;color:#999;font-weight:400;letter-spacing:-0.55px">хвилина</div>
<div class="a" style="left:1554.00px;top:904.56px;font-size:33px;line-height:40px;color:#fff;font-weight:400;letter-spacing:-0.188px">Перейти до оплати</div>
<div class="a" style="left:2018.00px;top:904.01px;font-size:34px;line-height:41px;color:#333;font-weight:700;letter-spacing:0.6px">120,00</div>
<div class="a" style="left:63.20px;top:1025.09px;font-size:41px;line-height:49px;color:#333;font-weight:700;letter-spacing:0px">3</div>
<div class="a" style="left:100.60px;top:1025.09px;font-size:41px;line-height:49px;color:#333;font-weight:700;letter-spacing:0px">4</div>
<div class="a" style="left:43.60px;top:1076.54px;font-size:27px;line-height:32px;color:#999;font-weight:400;letter-spacing:-0.55px">хвилина</div>
<div class="a" style="left:542.80px;top:1036.81px;font-size:24.5px;line-height:29px;color:#4a8fe0;font-weight:700;letter-spacing:0px">N</div>
<div class="a" style="left:572.30px;top:1036.81px;font-size:24.5px;line-height:29px;color:#4a8fe0;font-weight:700;letter-spacing:0px">1</div>
<div class="a" style="left:613.00px;top:1036.91px;font-size:24.5px;line-height:29px;color:#333;font-weight:700;letter-spacing:-0.2px">СТІЛ 1</div>
<div class="a" style="left:1244.70px;top:1036.91px;font-size:24.5px;line-height:29px;color:#c9333f;font-weight:700;letter-spacing:-0.867px">НОВЕ</div>
<div class="a" style="left:1245.50px;top:1079.44px;font-size:27px;line-height:32px;color:#999;font-weight:400;letter-spacing:-0.55px">хвилина</div>
<div class="a" style="left:1554.00px;top:1046.56px;font-size:33px;line-height:40px;color:#fff;font-weight:400;letter-spacing:-0.188px">Перейти до оплати</div>
<div class="a" style="left:2055.00px;top:1046.01px;font-size:34px;line-height:41px;color:#333;font-weight:700;letter-spacing:1.033px">0,00</div>
<div class="a" style="left:0;top:1390px;width:2212px;height:82px;background:linear-gradient(rgba(0,0,0,0) 0%,rgba(0,0,0,.012) 35%,rgba(0,0,0,.035) 60%,rgba(0,0,0,.09) 100%)"></div>
<div class="a" style="left:0;top:0;width:2px;height:1472px;background:#c4c4c4"></div><div class="a" style="left:0;top:114px;width:2px;height:81px;background:#5f5f5f"></div><div class="a" style="left:0;top:1399px;width:2px;height:73px;background:#5f5f5f"></div><svg class="a" style="left:0;top:1442px" width="2212" height="30"><path d="M0 10 H2 C2.5 20 6.5 26.5 13.5 30 H0 Z" fill="#5f5f5f"/><path d="M2212 20 V30 H2202.5 C2206.5 27.5 2210 24 2212 20 Z" fill="#a3a3a3"/></svg>
</div></body></html>
